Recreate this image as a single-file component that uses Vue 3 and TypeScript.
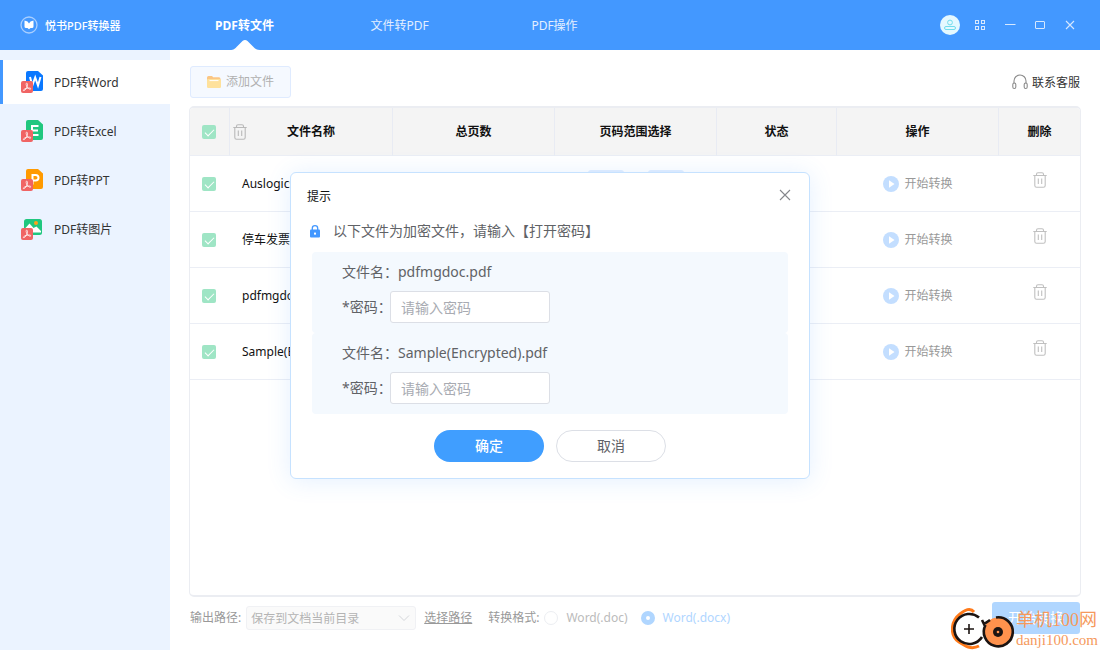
<script setup lang="ts">
import { ref } from 'vue'

interface FileRow {
  name: string
  checked: boolean
}

const tabs = ['PDF转文件', '文件转PDF', 'PDF操作']
const activeTab = ref(0)

const modes = [
  { label: 'PDF转Word', color: '#0a78ff', letter: 'W' },
  { label: 'PDF转Excel', color: '#20c77f', letter: 'E' },
  { label: 'PDF转PPT', color: '#ff9a00', letter: 'P' },
  { label: 'PDF转图片', color: '#20c77f', letter: '' },
]
const activeMode = ref(0)

const allChecked = ref(true)
const rows = ref<FileRow[]>([
  { name: 'Auslogics.pdf', checked: true },
  { name: '停车发票.pdf', checked: true },
  { name: 'pdfmgdoc.pdf', checked: true },
  { name: 'Sample(Encrypted).pdf', checked: true },
])

const locked = ref([
  { name: 'pdfmgdoc.pdf', password: '' },
  { name: 'Sample(Encrypted).pdf', password: '' },
])
const format = ref('docx')
</script>

<template>
  <div class="app">
    <header class="topbar">
      <div class="brand">
        <svg width="18" height="18" viewBox="0 0 18 18">
          <circle cx="9" cy="9" r="8" fill="none" stroke="#a9cfff" stroke-width="1.3" />
          <path d="M4.500 4.500 L7.500 5.500 L9 7.500 L10.500 5.500 L13.500 4.500 V10.500 Q13.500 12 12 12 L10.500 12 L9 13.200 L7.500 12 L6 12 Q4.500 12 4.500 10.500 Z" fill="#fff" />
        </svg>
        <span>悦书PDF转换器</span>
      </div>
      <nav class="tabs">
        <button
          v-for="(tab, i) in tabs"
          :key="tab"
          type="button"
          class="tab"
          :class="{ active: i === activeTab }"
          @click="activeTab = i"
        >
          {{ tab }}
          <svg v-if="i === activeTab" class="notch" width="30" height="10" viewBox="0 0 30 10">
            <path d="M0 10 C4 10 5 8.5 7 6.5 L12.5 1 Q15 -1 17.5 1 L23 6.5 C25 8.5 26 10 30 10 Z" fill="#fff" />
          </svg>
        </button>
      </nav>
      <div class="window-tools">
        <button type="button" aria-label="用户">
          <svg width="20" height="20" viewBox="0 0 20 20">
            <circle cx="10" cy="10" r="10" fill="#e4f8ff" />
            <circle cx="10" cy="7.5" r="2.4" fill="none" stroke="#72dcec" />
            <rect x="4.5" y="11.5" width="11" height="3" rx="1.5" fill="none" stroke="#72dcec" />
          </svg>
        </button>
        <button type="button" aria-label="菜单">
          <svg width="20" height="20" viewBox="0 0 20 20" fill="none" stroke="#d6e8ff">
            <rect x="5.5" y="5.5" width="3" height="3" />
            <rect x="11.5" y="5.5" width="3" height="3" />
            <rect x="5.5" y="11.5" width="3" height="3" />
            <rect x="11.5" y="11.5" width="3" height="3" />
          </svg>
        </button>
        <button type="button" aria-label="最小化">
          <svg width="20" height="20" viewBox="0 0 20 20"><path d="M5 9.5 H15.5" stroke="#d6e8ff" /></svg>
        </button>
        <button type="button" aria-label="最大化">
          <svg width="20" height="20" viewBox="0 0 20 20">
            <rect x="5.5" y="6.5" width="9" height="7" rx="0.5" fill="none" stroke="#d6e8ff" />
          </svg>
        </button>
        <button type="button" aria-label="关闭">
          <svg width="20" height="20" viewBox="0 0 20 20"><path d="M6 6 L14 14 M14 6 L6 14" stroke="#d6e8ff" stroke-width="1.1" /></svg>
        </button>
      </div>
    </header>

    <div class="body">
      <aside class="sidebar">
        <button
          v-for="(mode, i) in modes"
          :key="mode.label"
          type="button"
          class="mode"
          :class="{ active: i === activeMode }"
          @click="activeMode = i"
        >
          <svg width="22" height="22" viewBox="0 0 22 22">
            <template v-if="mode.letter">
              <path d="M7 0 H17 L22 4.5 V18 Q22 20 20 20 H7 Q5 20 5 18 V2 Q5 0 7 0 Z" :fill="mode.color" />
              <path v-if="mode.letter === 'W'" d="M9 6 L11.3 14.5 L14.2 6.5 L17 14.5 L19.5 6" fill="none" stroke="#fff" stroke-width="2" />
              <path v-else-if="mode.letter === 'E'" d="M17.5 6 H11 V15 H17.5 M11 10.5 H17" fill="none" stroke="#fff" stroke-width="2" />
              <path v-else d="M11.500 15.500 V6 H14.500 Q17.500 6 17.500 8.800 Q17.500 11.500 14.500 11.500 H11.500" fill="none" stroke="#fff" stroke-width="2" />
            </template>
            <template v-else>
              <rect x="3" y="1" width="18" height="16" rx="2.5" :fill="mode.color" />
              <circle cx="15" cy="5" r="2" fill="#ffa21a" />
              <path d="M4 10.500 L8.500 5.500 L12.500 10 L15.500 8.500 L20 13 V14.500 H4 Z" fill="#fff" />
            </template>
            <rect x="0" y="10" width="12" height="12" rx="2" fill="#f06464" />
            <path d="M5.6 12.2 C7 12.2 6.6 14.6 5.6 16.6 C4.6 18.6 3.3 20 2.5 19.6 C1.7 18.9 4 17.6 6 17.2 C8 16.8 10 17 9.8 17.9 C9.4 18.8 7.6 17.8 6.5 16.5 C5.3 15 4.6 12.4 5.6 12.2 Z" fill="none" stroke="#fff" stroke-width="0.8" />
          </svg>
          <span>{{ mode.label }}</span>
        </button>
      </aside>

      <main class="main">
        <div class="toolbar">
          <button type="button" class="add" disabled>
            <svg width="14" height="12" viewBox="0 0 14 12">
              <path d="M0 1.5 Q0 0 1.5 0 H5 L6.2 1.3 H12 Q13.5 1.3 13.5 3 V6 H0 Z" fill="#fbc684" />
              <rect x="0" y="3" width="14" height="9" rx="1.2" fill="#fee19c" />
              <path d="M2.5 4.6 H11.5" stroke="#fff" />
            </svg>
            添加文件
          </button>
          <a href="#" class="contact">
            <svg width="16" height="16" viewBox="0 0 16 16" fill="none" stroke="#8c8c8c" stroke-width="1.1">
              <path d="M2 9.5 V7 A6 6 0 0 1 14 7 V9.5" />
              <rect x="0.8" y="9" width="3" height="5.5" rx="1.4" />
              <rect x="12.2" y="9" width="3" height="5.5" rx="1.4" />
            </svg>
            <span>联系客服</span>
          </a>
        </div>

        <div class="table-box">
          <table>
            <colgroup>
              <col class="c-check" /><col class="c-name" /><col /><col /><col class="c-status" /><col /><col class="c-delete" />
            </colgroup>
            <thead>
              <tr>
                <th><input v-model="allChecked" type="checkbox" disabled aria-label="全选" /></th>
                <th>
                  <div class="name-head">
                    <button type="button" class="trash" disabled aria-label="清空">
                      <svg width="14" height="16" viewBox="0 0 14 16" fill="none" stroke="#b9b9b9" stroke-width="1.1">
                        <path d="M0.3 3.5 H13.7 M3.5 3.3 V2.2 Q3.5 0.8 5 0.8 H9 Q10.5 0.8 10.5 2.2 V3.3 M1.8 3.5 V13.5 Q1.8 15.3 3.6 15.3 H10.4 Q12.2 15.3 12.2 13.5 V3.5 M5.3 6.5 V12 M8.7 6.5 V12" />
                      </svg>
                    </button>
                    <span>文件名称</span>
                  </div>
                </th>
                <th>总页数</th>
                <th>页码范围选择</th>
                <th>状态</th>
                <th>操作</th>
                <th>删除</th>
              </tr>
            </thead>
            <tbody>
              <tr v-for="row in rows" :key="row.name">
                <td><input v-model="row.checked" type="checkbox" disabled :aria-label="row.name" /></td>
                <td class="name">{{ row.name }}</td>
                <td></td>
                <td>
                  <div class="range">
                    <input type="text" disabled aria-label="起始页" />
                    <input type="text" disabled aria-label="结束页" />
                  </div>
                </td>
                <td></td>
                <td>
                  <button type="button" class="start" disabled>
                    <svg width="16" height="16" viewBox="0 0 16 16">
                      <circle cx="8" cy="8" r="8" fill="#c3deff" />
                      <path d="M6 4.3 L11.5 8 L6 11.7 Z" fill="#fff" />
                    </svg>
                    开始转换
                  </button>
                </td>
                <td>
                  <button type="button" class="trash raised" disabled aria-label="删除">
                    <svg width="14" height="16" viewBox="0 0 14 16" fill="none" stroke="#c0c0c0" stroke-width="1.1">
                      <path d="M0.3 3.5 H13.7 M3.5 3.3 V2.2 Q3.5 0.8 5 0.8 H9 Q10.5 0.8 10.5 2.2 V3.3 M1.8 3.5 V13.5 Q1.8 15.3 3.6 15.3 H10.4 Q12.2 15.3 12.2 13.5 V3.5 M5.3 6.5 V12 M8.7 6.5 V12" />
                    </svg>
                  </button>
                </td>
              </tr>
            </tbody>
          </table>
        </div>

        <footer class="footer">
          <label for="output">输出路径:</label>
          <div class="select">
            <select id="output" disabled>
              <option>保存到文档当前目录</option>
            </select>
            <svg width="12" height="8" viewBox="0 0 12 8"><path d="M1 1.5 L6 6.5 L11 1.5" fill="none" stroke="#d4d6da" /></svg>
          </div>
          <a href="#" class="choose">选择路径</a>
          <fieldset>
            <legend>转换格式:</legend>
            <label class="radio"><input v-model="format" type="radio" value="doc" disabled />Word(.doc)</label>
            <label class="radio"><input v-model="format" type="radio" value="docx" disabled />Word(.docx)</label>
          </fieldset>
          <button type="button" class="convert" disabled>开始转换</button>
        </footer>
      </main>
    </div>

    <div class="overlay">
      <form class="dialog" role="dialog" aria-labelledby="dialog-title" @submit.prevent>
        <div class="dialog-head">
          <span id="dialog-title">提示</span>
          <button type="button" aria-label="关闭">
            <svg width="12" height="12" viewBox="0 0 12 12"><path d="M1 1 L11 11 M11 1 L1 11" stroke="#85878c" stroke-width="1.1" /></svg>
          </button>
        </div>
        <p class="notice">
          <svg width="10" height="13" viewBox="0 0 10 13">
            <path d="M2.3 5 V3.2 A2.7 2.5 0 0 1 7.7 3.2 V5" fill="none" stroke="#4398ff" stroke-width="1.3" />
            <rect x="0" y="4.6" width="10" height="8" rx="1" fill="#4398ff" />
            <rect x="4" y="7.6" width="2" height="2" fill="#fff" />
          </svg>
          以下文件为加密文件，请输入【打开密码】
        </p>
        <div v-for="(file, i) in locked" :key="file.name" class="locked">
          <div class="file-line">文件名：{{ file.name }}</div>
          <div class="password-line">
            <label :for="'pw' + i">*密码：</label>
            <input :id="'pw' + i" v-model="file.password" type="password" placeholder="请输入密码" />
          </div>
        </div>
        <div class="actions">
          <button type="submit" class="primary">确定</button>
          <button type="button" class="plain">取消</button>
        </div>
      </form>
    </div>

    <div class="site-mark">
      <svg width="64" height="44" viewBox="0 0 64 44" fill="none">
        <path d="M23 6 C19 1 14 4 9 8 C-1 16 -1 30 8 36 C14 40 20 44 28 40" stroke="#ff7a1a" stroke-width="3" />
        <circle cx="18" cy="23" r="15" fill="#fff" />
        <path d="M28 11.500 A15 15 0 1 0 31 31" stroke="#1c1412" stroke-width="2.600" />
        <path d="M18 18 V28 M13 23 H23" stroke="#1c1412" stroke-width="1.600" />
        <circle cx="47" cy="26" r="14.500" fill="#ff924d" />
        <path d="M31 14 L33 18 L39 14 M45 11.500 A14.500 14.500 0 1 1 34.500 19" stroke="#1c1412" stroke-width="2.600" />
        <circle cx="47" cy="26" r="5" fill="#1c1412" />
        <circle cx="47" cy="26" r="1.300" fill="#ff924d" />
      </svg>
      <div class="mark-text">
        <span class="mark-name">单机100网</span>
        <span class="mark-url">danji100.com</span>
      </div>
    </div>
  </div>
</template>

<style>
body {
  margin: 0;
}
</style>

<style scoped>
.app {
  position: relative;
  display: flex;
  flex-direction: column;
  min-height: 100vh;
  font: 12px/20px "Noto Sans", "Noto Sans CJK SC", sans-serif;
  color: #333;
  background: #fff;
}
* {
  box-sizing: border-box;
}
button,
input,
select {
  margin: 0;
  font: inherit;
  color: inherit;
}
button {
  padding: 0;
  border: 0;
  background: none;
}
svg {
  display: block;
  flex: none;
}
a {
  color: inherit;
}

.topbar {
  display: flex;
  align-items: center;
  height: 50px;
  padding-right: 20px;
  background: #4398ff;
  color: #fff;
}
.brand {
  display: flex;
  align-items: center;
  gap: 7px;
  width: 167px;
  padding-left: 20px;
  font-size: 11px;
  font-weight: 500;
}
.brand span,
.mode span,
.contact span {
  padding-top: 2px;
}
.tabs {
  display: flex;
  flex: 1;
  height: 100%;
}
.tab {
  position: relative;
  width: 155px;
  padding-top: 2px;
  color: #e3efff;
}
.tab.active {
  color: #fff;
  font-weight: 700;
}
.notch {
  position: absolute;
  bottom: 0;
  left: 50%;
  margin-left: -15px;
}
.window-tools {
  display: flex;
  gap: 10px;
}

.body {
  display: flex;
  flex: 1;
}
.sidebar {
  display: flex;
  flex-direction: column;
  gap: 5px;
  width: 170px;
  padding-top: 10px;
  background: #ebf3ff;
}
.mode {
  display: flex;
  align-items: center;
  gap: 11px;
  height: 44px;
  padding-left: 18px;
  border-left: 3px solid transparent;
}
.mode.active {
  border-left-color: #4398ff;
  background: #fff;
}

.main {
  display: flex;
  flex: 1;
  flex-direction: column;
  min-width: 0;
  padding: 16px 19px;
}
.toolbar {
  display: flex;
  align-items: center;
  justify-content: space-between;
  padding: 0 1px;
  margin-bottom: 8px;
}
.add {
  display: flex;
  align-items: center;
  gap: 5px;
  height: 32px;
  padding: 0 16px;
  border: 1px solid #dfebff;
  border-radius: 3px;
  background: #f5f9ff;
  color: #b0b0b0;
}
.contact {
  display: flex;
  align-items: center;
  gap: 4px;
  text-decoration: none;
}
.table-box {
  flex: 1;
  border: solid #ebedf2;
  border-width: 2px 1px;
  border-radius: 5px;
  overflow: hidden;
}
table {
  width: 100%;
  table-layout: fixed;
  border-collapse: separate;
  border-spacing: 0;
}
.c-check {
  width: 40px;
}
.c-name {
  width: 163px;
}
.c-status {
  width: 120px;
}
.c-delete {
  width: 81px;
}
th,
td {
  padding: 0;
  border-bottom: 1px solid #ebeef5;
  text-align: center;
}
th {
  height: 48px;
  background: #f4f4f4;
  border-right: 1px solid #e8ebf3;
  color: #111;
  font-weight: 700;
}
th:last-child {
  border-right: 0;
}
td {
  height: 56px;
  color: #111;
}
th:first-child {
  padding-right: 1px;
}
td:first-child {
  padding-right: 2px;
}
.name {
  padding-left: 12px;
  text-align: left;
}
.name-head {
  display: grid;
  grid-template-columns: 18px 1fr 18px;
  align-items: center;
  padding: 0 3px;
}
.trash {
  display: inline-block;
  vertical-align: middle;
}
.raised {
  padding-bottom: 7px;
}
input[type='checkbox'] {
  display: block;
  width: 14px;
  height: 14px;
  margin: 0 auto;
  border-radius: 2px;
  background: #9fe5c5;
  appearance: none;
}
input[type='checkbox']:checked::after {
  content: '';
  display: block;
  width: 8px;
  height: 4px;
  margin: 4px 3px;
  border: solid #fff;
  border-width: 0 0 1px 1px;
  transform: rotate(-45deg);
}
.range {
  display: flex;
  justify-content: center;
  gap: 24px;
}
.range input {
  width: 36px;
  height: 28px;
  border: 0;
  border-radius: 3px;
  background: #e3efff;
}
.start {
  display: flex;
  align-items: center;
  gap: 5px;
  margin: 0 auto;
  color: #999;
}

.footer {
  display: flex;
  align-items: center;
  height: 32px;
  margin-top: 5px;
  padding: 0 1px;
  color: #999;
}
.select {
  position: relative;
  width: 170px;
  margin: 0 8px 0 5px;
}
.select select {
  display: block;
  width: 100%;
  height: 24px;
  padding: 2px 4px 0;
  border: 1px solid #f0f1f4;
  border-radius: 3px;
  background: #fafafa;
  color: #b4b4b4;
  opacity: 1;
  appearance: none;
}
.select svg {
  position: absolute;
  top: 8px;
  right: 6px;
}
fieldset {
  display: flex;
  align-items: center;
  margin: 0 0 0 16px;
  padding: 0;
  border: 0;
}
legend {
  float: left;
  padding: 0;
  margin-right: 5px;
}
.radio {
  display: flex;
  align-items: center;
  gap: 8px;
  margin-right: 13px;
  color: #bbb;
}
.radio input {
  width: 14px;
  height: 14px;
  border: 1px solid #eceef2;
  border-radius: 50%;
  background: #fff;
  appearance: none;
}
.radio input:checked {
  border: 5px solid #b0d6ff;
}
.radio:has(input:checked) {
  color: #b0d6ff;
}
.convert {
  width: 88px;
  height: 32px;
  margin-left: auto;
  border-radius: 3px;
  background: #b0d6ff;
  color: #fff;
  font-size: 14px;
}

.overlay {
  position: absolute;
  inset: 0;
  display: flex;
  align-items: center;
  justify-content: center;
  padding-top: 1px;
}
.dialog {
  width: 520px;
  padding: 0 21px 16px;
  border: 1px solid #c6e2ff;
  border-radius: 6px;
  background: #fff;
  box-shadow: 0 2px 24px rgba(64, 152, 255, 0.14);
  color: #606266;
  font-size: 14px;
}
.dialog-head {
  display: flex;
  align-items: center;
  justify-content: space-between;
  height: 48px;
  margin: 0 -3px 0 -5px;
  color: #111;
  font-size: 12px;
}
.dialog-head button {
  padding-bottom: 4px;
}
.notice {
  display: flex;
  align-items: center;
  gap: 13px;
  margin: 0 0 11px -2px;
}
.locked {
  padding: 10px 30px;
  border-radius: 4px;
  background: #f4f9fe;
}
.password-line {
  display: flex;
  align-items: center;
  margin-top: 9px;
}
.password-line label {
  width: 48px;
  white-space: nowrap;
}
.password-line input {
  width: 160px;
  height: 32px;
  padding: 0 10px;
  border: 1px solid #dcdfe6;
  border-radius: 3px;
  background: #fff;
}
.password-line input::placeholder {
  color: #a8abb2;
}
.actions {
  display: flex;
  justify-content: center;
  gap: 12px;
  margin-top: 16px;
}
.actions button {
  width: 110px;
  height: 32px;
  border-radius: 16px;
}
.actions .primary {
  background: #409eff;
  color: #fff;
  font-weight: 500;
}
.actions .plain {
  border: 1px solid #dcdfe6;
}

.site-mark {
  position: absolute;
  right: 2px;
  bottom: 0;
  display: flex;
  align-items: flex-end;
  gap: 1px;
  font-family: "Liberation Serif", "Noto Sans CJK SC", serif;
  color: #f5995c;
}
.mark-text {
  display: flex;
  flex-direction: column;
}
.mark-name {
  font-size: 18px;
  line-height: 20px;
}
.mark-url {
  font-size: 15px;
  line-height: 20px;
}
</style>
